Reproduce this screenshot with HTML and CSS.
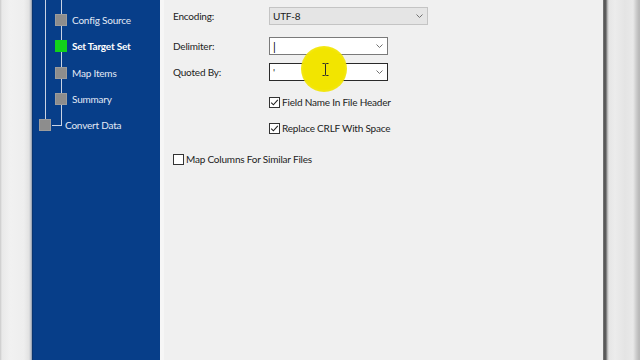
FILE: index.html
```html
<!DOCTYPE html>
<html>
<head>
<meta charset="utf-8">
<link rel="stylesheet" href="styles.css">
</head>
<body>
<div class="screen">
  <div class="gutter-left"></div>
  <nav class="sidebar">
    <ul class="tree">
      <li class="node root"><span class="box"></span></li>
      <li class="node child"><span class="box"></span><span class="label">Config Source</span></li>
      <li class="node child active"><span class="box"></span><span class="label">Set Target Set</span></li>
      <li class="node child"><span class="box"></span><span class="label">Map Items</span></li>
      <li class="node child"><span class="box"></span><span class="label">Summary</span></li>
      <li class="node root last"><span class="box"></span><span class="label">Convert Data</span></li>
    </ul>
  </nav>
  <div class="sep"></div>
  <main class="form">
    <div class="row r1">
      <label class="lbl">Encoding:</label>
      <div class="select wide disabled"><span class="value">UTF-8</span>
        <svg class="chev" width="7" height="4" viewBox="0 0 7 4"><polyline points="0.5,0.5 3.5,3.5 6.5,0.5" fill="none" stroke="#707070" stroke-width="1"/></svg>
      </div>
    </div>
    <div class="row r2">
      <label class="lbl">Delimiter:</label>
      <div class="select"><span class="value pipe">|</span>
        <svg class="chev" width="7" height="4" viewBox="0 0 7 4"><polyline points="0.5,0.5 3.5,3.5 6.5,0.5" fill="none" stroke="#707070" stroke-width="1"/></svg>
      </div>
    </div>
    <div class="row r3">
      <label class="lbl">Quoted By:</label>
      <div class="select focus"><span class="value">'</span>
        <svg class="chev" width="7" height="4" viewBox="0 0 7 4"><polyline points="0.5,0.5 3.5,3.5 6.5,0.5" fill="none" stroke="#707070" stroke-width="1"/></svg>
      </div>
    </div>
    <div class="check c1 indent">
      <span class="cb on"><svg width="9" height="9" viewBox="0 0 9 9"><polyline points="1.2,4.6 3.4,6.8 7.8,1.8" fill="none" stroke="#222" stroke-width="1.1"/></svg></span>
      <span class="ctext">Field Name In File Header</span>
    </div>
    <div class="check c2 indent">
      <span class="cb on"><svg width="9" height="9" viewBox="0 0 9 9"><polyline points="1.2,4.6 3.4,6.8 7.8,1.8" fill="none" stroke="#222" stroke-width="1.1"/></svg></span>
      <span class="ctext">Replace CRLF With Space</span>
    </div>
    <div class="check c3">
      <span class="cb"></span>
      <span class="ctext">Map Columns For Similar Files</span>
    </div>
    <div class="highlight"></div>
    <svg class="ibeam" width="7" height="13" viewBox="0 0 7 13"><path d="M0.5 0.5 H2.5 Q3.5 0.5 3.5 1.5 V11.5 Q3.5 12.5 2.5 12.5 H0.5 M6.5 0.5 H4.5 Q3.5 0.5 3.5 1.5 M3.5 11.5 Q3.5 12.5 4.5 12.5 H6.5" fill="none" stroke="#2a2a2a" stroke-width="1"/></svg>
  </main>
  <div class="gutter-right"></div>
</div>
</body>
</html>
```
FILE: styles.css
```css
html, body {
  margin: 0;
  padding: 0;
}
body {
  width: 640px;
  height: 360px;
  overflow: hidden;
  font-family: Lato, "Liberation Sans", sans-serif;
  font-size: 10px;
  letter-spacing: -0.2px;
  color: #1c1c1c;
  background: #f0f0f0;
}
.screen {
  display: flex;
  height: 360px;
}
.gutter-left {
  width: 32px;
  flex: none;
  background: linear-gradient(to right, #c9c9c9 0, #e9e9e9 2px, #f1f1f1 10px, #eeeeee 24px, #e2e2e2 29px, #b9bec6 31px, #7f8ea8 32px);
}
.sidebar {
  width: 128px;
  flex: none;
  background: #073e89;
  position: relative;
  overflow: hidden;
  box-shadow: inset 1px 0 0 #0a356f;
}
.tree {
  list-style: none;
  margin: -19.5px 0 0 0;
  padding: 0;
  position: relative;
}
.tree::before {
  content: "";
  position: absolute;
  left: 13px;
  top: 0;
  width: 1px;
  height: 138px;
  background: #c9d3e4;
}
.tree::after {
  content: "";
  position: absolute;
  left: 20px;
  top: 0;
  width: 9px;
  height: 144px;
  border-right: 1px solid #c9d3e4;
  border-bottom: 1px solid #c9d3e4;
}
.node {
  height: 26.3px;
  display: flex;
  align-items: center;
  position: relative;
  z-index: 1;
}
.box {
  width: 12px;
  height: 12px;
  background: #8d8d8d;
  box-shadow: inset 0 0 0 1px #9c9c9c;
  flex: none;
}
.root .box {
  margin-left: 7px;
}
.child .box {
  margin-left: 23px;
}
.label {
  color: #e3eaf5;
  white-space: nowrap;
  font-size: 10px;
}
.child .label {
  margin-left: 5px;
}
.root .label {
  margin-left: 14px;
}
.active .box {
  background: #12d21a;
  box-shadow: none;
}
.active .label {
  font-weight: bold;
  color: #ffffff;
}
.sep {
  width: 4px;
  flex: none;
  background: #f6f6f6;
}
.form {
  width: 439px;
  flex: none;
  background: #f0f0f0;
  position: relative;
  padding: 7px 0 0 9px;
  box-sizing: border-box;
}
.row {
  display: flex;
  align-items: center;
  height: 18px;
}
.r2 { margin-top: 12px; }
.r3 { margin-top: 8px; }
.lbl {
  width: 96px;
  flex: none;
}
.select {
  width: 119px;
  height: 18px;
  box-sizing: border-box;
  border: 1px solid #7a7a7a;
  background: #ffffff;
  display: flex;
  align-items: center;
  justify-content: space-between;
  padding: 0 4px 0 3px;
}
.select.wide {
  width: 159px;
}
.select.disabled {
  background: #e5e5e5;
  border-color: #c4c4c4;
}
.select.focus {
  border-color: #2a2a2a;
}
.value {
  color: #1c1c1c;
}
.pipe {
  font-size: 11px;
  color: #000000;
}
.chev {
  display: block;
}
.check {
  display: flex;
  align-items: center;
  height: 14px;
}
.indent {
  padding-left: 96px;
}
.c1 { margin-top: 14px; }
.c2 { margin-top: 12px; }
.c3 { margin-top: 17px; }
.cb {
  width: 11px;
  height: 11px;
  box-sizing: border-box;
  border: 1px solid #333333;
  background: #ffffff;
  display: flex;
  align-items: center;
  justify-content: center;
  flex: none;
}
.ctext {
  margin-left: 2px;
}
.highlight {
  position: absolute;
  left: 137px;
  top: 46px;
  width: 46px;
  height: 46px;
  border-radius: 50%;
  background: radial-gradient(circle, #f2e500 0, #f2e500 62%, rgba(242, 229, 0, 0.75) 82%, rgba(242, 229, 0, 0) 100%);
}
.ibeam {
  position: absolute;
  left: 158px;
  top: 63px;
}
.gutter-right {
  flex: 1;
  background: linear-gradient(to right, #8a8a8a 0, #575757 1px, #5e5e5e 3px, #a8a8a8 4px, #e6e6e6 6px, #ececec 12px, #e4e4e4 22px, #e9e9e9 30px, #cfcfcf 33px, #b9b9b9 36px);
}
```
